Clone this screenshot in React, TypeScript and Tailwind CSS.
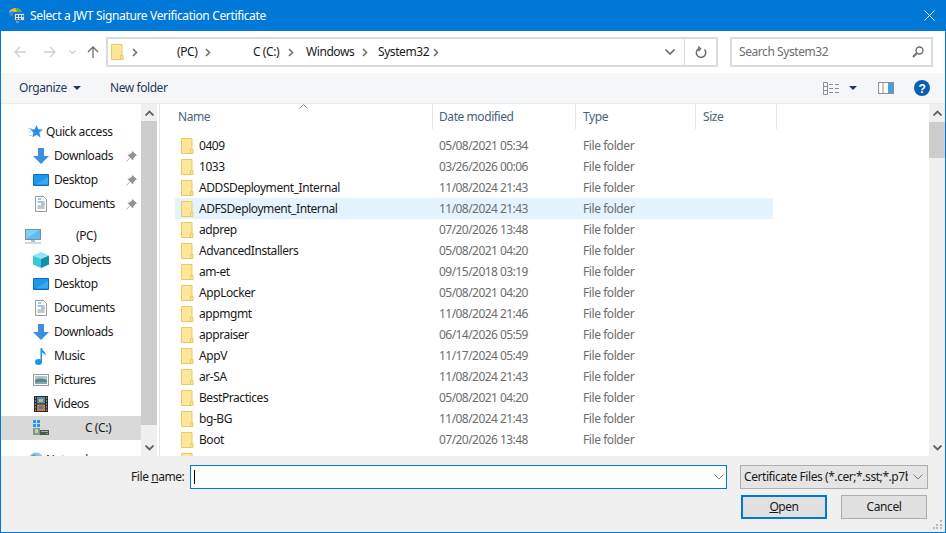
import type { ReactNode } from 'react';

const files = [
  ['0409', '05/08/2021 05:34'],
  ['1033', '03/26/2026 00:06'],
  ['ADDSDeployment_Internal', '11/08/2024 21:43'],
  ['ADFSDeployment_Internal', '11/08/2024 21:43'],
  ['adprep', '07/20/2026 13:48'],
  ['AdvancedInstallers', '05/08/2021 04:20'],
  ['am-et', '09/15/2018 03:19'],
  ['AppLocker', '05/08/2021 04:20'],
  ['appmgmt', '11/08/2024 21:46'],
  ['appraiser', '06/14/2026 05:59'],
  ['AppV', '11/17/2024 05:49'],
  ['ar-SA', '11/08/2024 21:43'],
  ['BestPractices', '05/08/2021 04:20'],
  ['bg-BG', '11/08/2024 21:43'],
  ['Boot', '07/20/2026 13:48'],
  ['', ''],
];

function Folder() {
  return (
    <svg width="13" height="16" viewBox="0 0 13 16">
      <path d="M.5.5h10.500v15H.5z" fill="#fee69b" stroke="#ebc95e" />
      <path d="M9.500 15.500v-4h2.500v4z" fill="#fee69b" stroke="#ebc95e" />
    </svg>
  );
}

function Chevron() {
  return (
    <svg width="6" height="9" viewBox="0 0 6 9" fill="none" stroke="#6d6d6d" strokeWidth="1.500">
      <path d="M1 1l3.500 3.500L1 8" />
    </svg>
  );
}

function Down({ color = '#808080' }: { color?: string }) {
  return (
    <svg width="10" height="6" viewBox="0 0 10 6" fill="none" stroke={color} strokeWidth="1">
      <path d="M.5.500L5 5 9.500.500" />
    </svg>
  );
}

function Caret() {
  return (
    <svg width="8" height="4" viewBox="0 0 8 4">
      <path d="M0 0h8L4 4z" fill="#1e3a5f" />
    </svg>
  );
}

function NavArrow({ color, flip }: { color: string; flip?: boolean }) {
  return (
    <svg width="12" height="12" viewBox="0 0 12 12" fill="none" stroke={color} strokeWidth="1.300" className={flip ? 'rotate-180' : ''}>
      <path d="M12 6H1M6 1L1 6l5 5" />
    </svg>
  );
}

function Pin() {
  return (
    <svg width="11" height="11" viewBox="0 0 11 11">
      <path d="M6.500 0L11 4.500 9.500 5 7.500 7.500 7 9.500 1.500 4 3.500 3.500 6 1.500z" fill="#8f9499" />
      <path d="M3.500 7L.5 10.500" stroke="#a9adb1" />
    </svg>
  );
}

function StarIcon() {
  return (
    <svg width="15" height="14" viewBox="0 0 15 14">
      <path d="M8.500 0l1.700 4.300 4.800.3-3.700 3 1.200 4.900-4-2.700-4.200 2.700 1.200-4.900-3.600-3 4.800-.3z" fill="#2b90e3" />
      <path d="M0 3.500h4M0 7h3M1 10.500h3" stroke="#b5daf7" />
    </svg>
  );
}

function DownloadIcon() {
  return (
    <svg width="16" height="16" viewBox="0 0 16 16">
      <path d="M5 0h6v8h5l-8 8-8-8h5z" fill="#3a8fe0" />
    </svg>
  );
}

function DesktopIcon() {
  return (
    <svg width="16" height="12" viewBox="0 0 16 12">
      <rect width="16" height="12" rx="1" fill="#0f6cc0" />
      <path d="M1 1h14v9.500H1z" fill="#1c97ea" />
      <path d="M3 10.500L15 3v7.500z" fill="#38aaf2" />
    </svg>
  );
}

function DocIcon() {
  return (
    <svg width="12" height="16" viewBox="0 0 12 16">
      <path d="M.5.500h8l3 3v12H.5z" fill="#fff" stroke="#9a9a9a" />
      <path d="M3 3h3M2.500 6h7M6 8h4" stroke="#4a8fc9" />
      <path d="M2.500 10h7M2.500 12h7" stroke="#8a8a8a" />
    </svg>
  );
}

function PcIcon() {
  return (
    <svg width="16" height="15" viewBox="0 0 16 15">
      <rect x=".5" y=".5" width="15" height="10" fill="#7fd0f7" stroke="#7d8f9c" />
      <path d="M1 10L14 1h1v9z" fill="#5cbdf0" />
      <path d="M6 11h4v2H6z" fill="#b6bcc2" />
      <path d="M0 13.500h16v1H0z" fill="#a8b0b7" />
    </svg>
  );
}

function CubeIcon() {
  return (
    <svg width="16" height="16" viewBox="0 0 16 16">
      <path d="M8 0l8 3.500-8 3.500-8-3.500z" fill="#8fe6ee" />
      <path d="M0 3.500L8 7v9l-8-3.500z" fill="#3fc5d8" />
      <path d="M16 3.500L8 7v9l8-3.500z" fill="#0f8fa8" />
    </svg>
  );
}

function MusicIcon() {
  return (
    <svg width="12" height="17" viewBox="0 0 12 17">
      <ellipse cx="3.500" cy="14" rx="3.500" ry="3" fill="#1e93e8" />
      <path d="M5.500 14V0h1.500c.3 3 4.500 4 3.500 8-.5-2-2.500-3-3.500-3.500V14z" fill="#1e93e8" />
    </svg>
  );
}

function PictureIcon() {
  return (
    <svg width="16" height="12" viewBox="0 0 16 12">
      <rect x=".5" y=".5" width="15" height="11" fill="#fff" stroke="#9a9a9a" />
      <path d="M2 2h12v4H2z" fill="#a9c7dc" />
      <path d="M2 6c3-2 7-2 12 0v4H2z" fill="#5e8a78" />
      <path d="M2 8h12v2H2z" fill="#7fa8c0" />
    </svg>
  );
}

function VideoIcon() {
  return (
    <svg width="14" height="16" viewBox="0 0 14 16">
      <rect width="14" height="16" fill="#2b2b2b" />
      <path d="M3 1h8v6.500H3z" fill="#3f8fd0" />
      <path d="M3 8.500h8V15H3z" fill="#c9813a" />
      <path d="M5 3h4v3H5z" fill="#e0b04a" />
      <path d="M5 10h4v3H5z" fill="#3f7fc0" />
      <path d="M1 2h1M1 5h1M1 8h1M1 11h1M1 14h1M12 2h1M12 5h1M12 8h1M12 11h1M12 14h1" stroke="#ddd" />
    </svg>
  );
}

function DriveIcon() {
  return (
    <svg width="16" height="16" viewBox="0 0 16 16">
      <path d="M0 0h3v3H0zM4 0h3v3H4zM0 4h3v3H0zM4 4h3v3H4z" fill="#1a9cf0" />
      <path d="M0 8h7v7H0z" fill="#7d9a8e" />
      <path d="M2 9h3v4H2z" fill="#d8c89a" />
      <path d="M7 10h9v5H7z" fill="#4a5550" />
      <path d="M8 11h7v1H8z" fill="#a8b0ac" />
      <path d="M13 13h2v1h-2z" fill="#38d060" />
    </svg>
  );
}

function GlobeIcon() {
  return (
    <svg width="16" height="16" viewBox="0 0 16 16">
      <circle cx="8" cy="8" r="7.500" fill="#8cc0e8" />
      <path d="M4 3c2-1 4 0 4 2S5 7 4 6zM9 9c2 0 4 0 3 3s-3 2-3 0z" fill="#6aa86a" />
    </svg>
  );
}

function TitleIcon() {
  return (
    <svg width="16" height="15" viewBox="0 0 16 15">
      <path d="M0 4C1 1 4 0 7 0l1 4H4v4H2z" fill="#e8b93c" />
      <path d="M7 0c3 0 5 1 6 4H8z" fill="#63b04a" />
      <path d="M0 4l4-1v5L2 8z" fill="#2f8fd8" />
      <path d="M5.500 5.500h10v7h-10z" fill="#cfe3f5" stroke="#2a6ba8" strokeWidth=".8" />
      <path d="M7 7h2v2H7zM10 7h2v2h-2zM13 7h1.500v2H13zM7 10h2v1.500H7zM10 10h2v1.500h-2z" fill="#2a6ba8" />
      <path d="M7 13h3v2H7z" fill="#7a98b8" />
    </svg>
  );
}

function NavRow({ icon, label, pin, indent, textLeft, active }: { icon: ReactNode; label: string; pin?: boolean; indent: string; textLeft: string; active?: boolean }) {
  return (
    <div className={`h-6 shrink-0 flex items-center ${active ? 'bg-[#d9d9d9]' : ''}`}>
      <div className={`${indent} flex items-center justify-center`}>{icon}</div>
      <span className={`${textLeft} flex-1 whitespace-nowrap`}>{label}</span>
      {pin && <span className="mr-[4px] flex"><Pin /></span>}
    </div>
  );
}

function Scrollbar({ thumb, thumbTop }: { thumb: string; thumbTop: string }) {
  return (
    <div className="w-4 h-full shrink-0 bg-[#f0f0f0] flex flex-col">
      <div className="h-[17px] shrink-0 flex items-center justify-center">
        <svg width="9" height="6" viewBox="0 0 9 6" fill="none" stroke="#606060" strokeWidth="1.800"><path d="M.5 5.500l4-4 4 4" /></svg>
      </div>
      <div className={`${thumbTop} shrink-0`} />
      <div className={`${thumb} shrink-0 bg-[#cdcdcd]`} />
      <div className="flex-1" />
      <div className="h-[17px] shrink-0 flex items-center justify-center">
        <svg width="9" height="6" viewBox="0 0 9 6" fill="none" stroke="#606060" strokeWidth="1.800"><path d="M.5.500l4 4 4-4" /></svg>
      </div>
    </div>
  );
}

function Column({ label, width, pad, sorted }: { label: string; width: string; pad: string; sorted?: boolean }) {
  return (
    <div className={`${width} ${pad} relative h-full shrink-0 border-r border-[#e5e5e5] flex items-center text-[#4c607a]`}>
      {label}
      {sorted && (
        <svg className="absolute left-[139px] top-0" width="9" height="5" viewBox="0 0 9 5" fill="none" stroke="#8a8a8a">
          <path d="M.5 4.500l4-4 4 4" />
        </svg>
      )}
    </div>
  );
}

export default function App() {
  return (
    <div className="w-[946px] h-[533px] overflow-hidden flex flex-col bg-[#0078d7] px-px pb-px text-[12px] leading-4 text-[#1a1a1a] font-['Noto_Sans',sans-serif] tracking-[-0.43px]">
      <div className="h-[31px] shrink-0 flex items-center text-white tracking-[-0.35px]">
        <span className="ml-[8px] flex"><TitleIcon /></span>
        <span className="ml-[5px]">Select a JWT Signature Verification Certificate</span>
        <svg className="ml-auto mr-[10px]" width="11" height="11" viewBox="0 0 11 11" fill="none" stroke="#fff"><path d="M.5.500l10 10M10.500.500l-10 10" /></svg>
      </div>

      <div className="h-[42px] shrink-0 bg-white flex items-center">
        <span className="ml-[13px] flex"><NavArrow color="#cfcfcf" /></span>
        <span className="ml-[18px] flex"><NavArrow color="#cfcfcf" flip /></span>
        <span className="ml-[13px] flex"><svg width="7" height="4" viewBox="0 0 7 4" fill="none" stroke="#cfcfcf" strokeWidth="1.200"><path d="M.5.500l3 3 3-3" /></svg></span>
        <span className="ml-[11px] flex rotate-90"><NavArrow color="#6d6d6d" /></span>
        <div className="ml-[7px] w-[612px] h-[30px] border-2 border-[#dadbdc] flex items-center bg-white whitespace-nowrap">
          <span className="ml-[3px] flex"><Folder /></span>
          <span className="ml-[8px] flex"><Chevron /></span>
          <span className="ml-[39px] w-[28px]">(PC)</span>
          <span className="flex"><Chevron /></span>
          <span className="ml-[42px] w-[29px]">C (C:)</span>
          <span className="ml-[6px] flex"><Chevron /></span>
          <span className="ml-[12px] w-[51px]">Windows</span>
          <span className="ml-[5px] flex"><Chevron /></span>
          <span className="ml-[10px] w-[52px]">System32</span>
          <span className="ml-[3px] flex"><Chevron /></span>
          <span className="ml-auto flex mr-[9px]"><svg width="10" height="6" viewBox="0 0 10 6" fill="none" stroke="#6d6d6d" strokeWidth="1.600"><path d="M.5.500L5 5 9.500.500" /></svg></span>
          <div className="h-full w-8 border-l border-[#dadbdc] flex items-center justify-center">
            <svg width="12" height="13" viewBox="0 0 12 13" fill="none" stroke="#6d6d6d" strokeWidth="1.500">
              <path d="M4 2.500a4.700 4.700 0 1 0 5.500 1" />
              <path d="M3 .500l2.500 2L3.500 5" />
            </svg>
          </div>
        </div>
        <div className="ml-[12px] w-[203px] h-[30px] border-2 border-[#dadbdc] flex items-center justify-between px-[7px] text-[#6d6d6d]">
          <span>Search System32</span>
          <svg width="12" height="12" viewBox="0 0 12 12" fill="none" stroke="#6d6d6d"><circle cx="7.500" cy="4.500" r="3.500" strokeWidth="1.400" /><path d="M5 7l-4 4" strokeWidth="2" /></svg>
        </div>
      </div>

      <div className="h-[30px] shrink-0 bg-[#f5f6f7] flex items-center text-[#1e395b]">
        <span className="ml-[18px] w-[48px]">Organize</span>
        <span className="ml-[6px] flex"><Caret /></span>
        <span className="ml-[29px]">New folder</span>
        <svg className="ml-auto" width="17" height="13" viewBox="0 0 17 13" fill="none" stroke="#8f8f8f">
          <path d="M.5.500h4v12h-4zM.5 4.500h4M.5 8.500h4M6 2.500h4M12 2.500h4M6 6.500h4M12 6.500h4M6 10.500h4M12 10.500h4" />
        </svg>
        <span className="ml-[9px] flex"><Caret /></span>
        <svg className="ml-[21px]" width="16" height="12" viewBox="0 0 16 12">
          <rect x=".5" y=".5" width="15" height="11" fill="#fff" stroke="#8f8f8f" />
          <path d="M5 0v12" stroke="#8f8f8f" />
          <path d="M10 1h5v10h-5z" fill="#4a9be0" />
        </svg>
        <svg className="ml-[20px] mr-[15px]" width="16" height="16" viewBox="0 0 16 16">
          <circle cx="8" cy="8" r="8" fill="#0c5fb0" />
          <text x="8" y="12.500" textAnchor="middle" fontSize="12" fontWeight="700" fill="#fff" fontFamily="Liberation Sans">?</text>
        </svg>
      </div>

      <div className="flex-1 min-h-0 flex bg-white border-t border-[#e9ecef]">
        <div className="w-[140px] shrink-0 pt-[16px] flex flex-col overflow-hidden">
          <NavRow icon={<StarIcon />} label="Quick access" indent="ml-[27px] w-[15px]" textLeft="ml-[3px]" />
          <NavRow icon={<DownloadIcon />} label="Downloads" pin indent="ml-[32px] w-[16px]" textLeft="ml-[5px]" />
          <NavRow icon={<DesktopIcon />} label="Desktop" pin indent="ml-[32px] w-[16px]" textLeft="ml-[5px]" />
          <NavRow icon={<DocIcon />} label="Documents" pin indent="ml-[32px] w-[16px]" textLeft="ml-[5px]" />
          <div className="h-2 shrink-0" />
          <NavRow icon={<PcIcon />} label="(PC)" indent="ml-[24px] w-[16px]" textLeft="ml-[35px]" />
          <NavRow icon={<CubeIcon />} label="3D Objects" indent="ml-[32px] w-[16px]" textLeft="ml-[5px]" />
          <NavRow icon={<DesktopIcon />} label="Desktop" indent="ml-[32px] w-[16px]" textLeft="ml-[5px]" />
          <NavRow icon={<DocIcon />} label="Documents" indent="ml-[32px] w-[16px]" textLeft="ml-[5px]" />
          <NavRow icon={<DownloadIcon />} label="Downloads" indent="ml-[32px] w-[16px]" textLeft="ml-[5px]" />
          <NavRow icon={<MusicIcon />} label="Music" indent="ml-[32px] w-[16px]" textLeft="ml-[5px]" />
          <NavRow icon={<PictureIcon />} label="Pictures" indent="ml-[32px] w-[16px]" textLeft="ml-[5px]" />
          <NavRow icon={<VideoIcon />} label="Videos" indent="ml-[32px] w-[16px]" textLeft="ml-[5px]" />
          <NavRow icon={<DriveIcon />} label="C (C:)" active indent="ml-[32px] w-[16px]" textLeft="ml-[36px]" />
          <div className="h-2 shrink-0" />
          <NavRow icon={<GlobeIcon />} label="Network" indent="ml-[27px] w-[16px]" textLeft="ml-[2px]" />
        </div>
        <Scrollbar thumbTop="h-0" thumb="h-[304px]" />
        <div className="w-[2px] shrink-0" />
        <div className="w-px shrink-0 bg-[#e5e5e5]" />

        <div className="flex-1 min-w-0 flex flex-col overflow-hidden">
          <div className="h-[25px] shrink-0 flex">
            <Column label="Name" width="w-[273px]" pad="pl-[18px]" sorted />
            <Column label="Date modified" width="w-[143px]" pad="pl-[6px]" />
            <Column label="Type" width="w-[120px]" pad="pl-[7px]" />
            <Column label="Size" width="w-[81px]" pad="pl-[7px]" />
          </div>
          <div className="pt-[6px] flex flex-col">
            {files.map(([name, date], i) => (
              <div key={i} className={`ml-[15px] w-[598px] h-[21px] shrink-0 flex items-center ${i === 3 ? 'bg-[#e5f3ff]' : ''}`}>
                <span className="ml-[6px] w-[18px] flex"><Folder /></span>
                <span className="w-[240px] whitespace-nowrap">{name}</span>
                <span className="w-[144px] text-[#6d6d6d] tracking-[-0.55px]">{date}</span>
                {name && <span className="text-[#6d6d6d]">File folder</span>}
              </div>
            ))}
          </div>
        </div>
        <Scrollbar thumbTop="h-px" thumb="h-[36px]" />
      </div>

      <div className="h-[76px] shrink-0 bg-[#f0f0f0] flex flex-col">
        <div className="mt-[9px] h-6 flex items-center">
          <span className="ml-[130px] w-[59px] whitespace-nowrap">File <span className="underline">n</span>ame:</span>
          <div className="w-[537px] h-6 border border-[#0078d7] bg-white flex items-center justify-between pl-[3px] pr-[2px]">
            <div className="w-px h-[14px] bg-black" />
            <Down />
          </div>
          <div className="ml-[13px] w-[188px] h-6 border border-[#adadad] bg-[#e5e5e5] flex items-center">
            <span className="ml-[3px] w-[164px] overflow-hidden whitespace-nowrap">Certificate Files (*.cer;*.sst;*.p7b;*.pfx)</span>
            <span className="ml-[5px] flex"><Down /></span>
          </div>
        </div>
        <div className="mt-[6px] flex items-center">
          <div className="ml-[740px] w-[86px] h-6 border-2 border-[#0078d7] bg-[#e1e1e1] flex items-center justify-center">
            <span><span className="underline">O</span>pen</span>
          </div>
          <div className="ml-[14px] w-[86px] h-6 border border-[#adadad] bg-[#e1e1e1] flex items-center justify-center">Cancel</div>
        </div>
        <div className="flex justify-end mt-[1px] pr-[2px]">
          <svg width="10" height="10" viewBox="0 0 10 10" fill="#b8b8b8">
            <path d="M7 0h2v2H7zM3 4h2v2H3zM7 4h2v2H7zM0 7h2v2H0zM3 7h2v2H3zM7 7h2v2H7z" />
          </svg>
        </div>
      </div>
    </div>
  );
}
